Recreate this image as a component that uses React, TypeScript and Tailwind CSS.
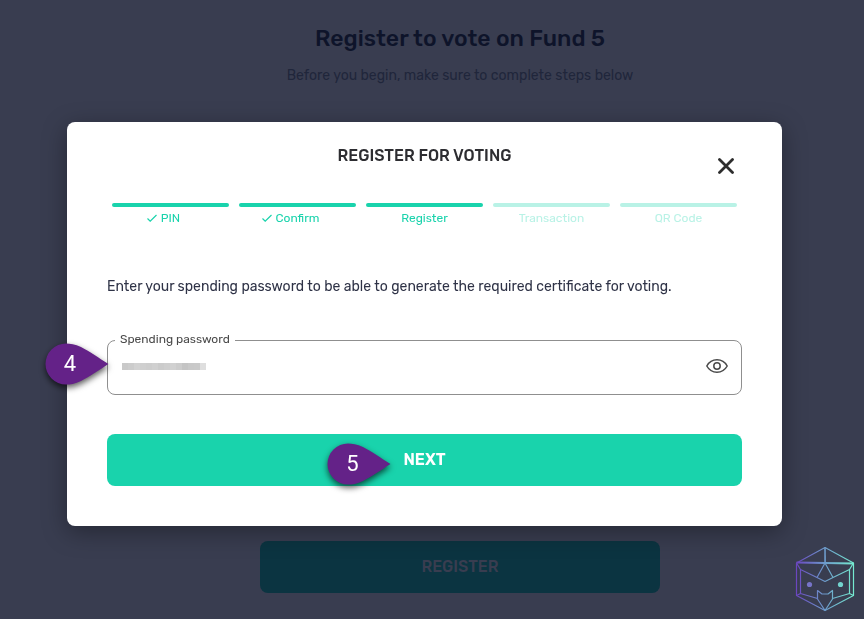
import type { ReactNode } from "react";

type Step = { label: string; state: "done" | "current" | "todo" };

const steps: Step[] = [
  { label: "PIN", state: "done" },
  { label: "Confirm", state: "done" },
  { label: "Register", state: "current" },
  { label: "Transaction", state: "todo" },
  { label: "QR Code", state: "todo" },
];

const maskBlocks = [
  "bg-[#c9c9c9]", "bg-[#cccccc]", "bg-[#d2d2d2]", "bg-[#cfcfcf]", "bg-[#cdcdcd]",
  "bg-[#d0d0d0]", "bg-[#cbcbcb]", "bg-[#cecece]", "bg-[#d1d1d1]", "bg-[#cccccc]",
  "bg-[#c4c4c4]", "bg-[#c8c8c8]", "bg-[#c9c9c9]", "bg-[#dedede]",
];

function Pin({ children }: { children: ReactNode }) {
  return (
    <span className="relative block h-[42px] w-16 font-[Roboto,Arial,sans-serif]">
      <svg
        viewBox="0 0 64 42"
        className="block h-full w-full overflow-visible drop-shadow-[0_3px_3px_rgba(0,0,0,0.65)]"
        aria-hidden="true"
      >
        <path
          d="M63.500 21 C54 15 44 8 36 4 C30 1 25 .5 21 .5 A20.5 20.5 0 0 0 21 41.5 C25 41.5 30 41 36 38 C44 34 54 27 63.500 21 Z"
          fill="#642288"
        />
      </svg>
      <span className="absolute inset-y-0 left-0 flex w-[50px] items-center justify-center text-[22px] leading-6 font-normal text-white">
        {children}
      </span>
    </span>
  );
}

function CubeLogo() {
  return (
    <svg viewBox="0 0 60 66" className="h-[66px] w-[60px]" fill="none" role="img" aria-label="Assistant">
      <defs>
        <linearGradient id="cube" gradientUnits="userSpaceOnUse" x1="1" y1="0" x2="59" y2="0">
          <stop offset="0" stopColor="#6b45c0" />
          <stop offset="0.5" stopColor="#6d9bcb" />
          <stop offset="1" stopColor="#75ecd0" />
        </linearGradient>
      </defs>
      <g stroke="url(#cube)" strokeWidth="1.2" strokeLinejoin="round">
        <path d="M30 1.5 58.5 17V49.500L30 64.500 1.500 49.500V17Z" />
        <path d="M1.500 16.500 58.500 17.500" strokeWidth="1.800" />
        <path d="M30 1.500 30.100 17" strokeWidth="1.600" />
        <path d="M1.500 17 5.500 23.500 22 31.500 30 35.500 38 31.500 54.500 23.500 58.500 17" />
        <path d="M30 17 22 31.500M30 17 38 31.500" />
        <path d="M5.500 23.500V47.500L22.500 52.500M1.500 49.500 5.500 47.500M54.500 23.500V47.500L37.500 52.500M58.500 49.500 54.500 47.500" />
        <path d="M22.500 44.500 27 48H33L37.500 44.500V53L30 64.500 22.500 53Z" />
      </g>
      <circle cx="14.500" cy="38.500" r="2.600" fill="#7774c8" />
      <circle cx="45.500" cy="38.500" r="2.600" fill="#73d3ce" />
    </svg>
  );
}

function StepItem({ label, state }: Step) {
  return (
    <li className={state === "todo" ? "flex-1 text-[#b9f2e6]" : "flex-1 text-[#19d3ac]"} aria-current={state === "current" ? "step" : undefined}>
      <div className="h-1 rounded-full bg-current" />
      <div className={`mt-[3px] flex items-center justify-center gap-1 text-xs leading-4 ${state === "done" ? "pr-3.5" : ""}`}>
        {state === "done" && (
          <svg viewBox="0 0 10 8" className="h-2 w-2.5" fill="none" stroke="currentColor" strokeWidth="1.200" aria-hidden="true">
            <path d="M.5 4.500 3.200 7.200 9.500 1" />
          </svg>
        )}
        {label}
      </div>
    </li>
  );
}

export default function App() {
  return (
    <div className="min-h-screen bg-[#393d50] font-[Rubik,Roboto,sans-serif]">
      <main className="flex min-h-screen flex-col items-center pt-5 pb-[26px] pl-14">
        <h1 className="text-[23px] leading-9 font-medium text-[#0e142a]">Register to vote on Fund 5</h1>
        <p className="mt-2 text-sm leading-6 text-[#20263b]">Before you begin, make sure to complete steps below</p>
        <button className="mt-auto h-13 w-full max-w-[400px] rounded-lg bg-[#0b3441] text-base font-medium text-[#393d50]">
          REGISTER
        </button>
      </main>

      <div className="fixed right-[9px] bottom-[7px]">
        <CubeLogo />
      </div>

      <div className="fixed inset-0 flex items-start justify-center pt-[122px] pr-[82px] pl-[67px]">
        <div
          role="dialog"
          aria-modal="true"
          aria-labelledby="dialog-title"
          className="w-full max-w-[715px] rounded-lg bg-white px-10 pt-5 pb-10 shadow-[0_6px_24px_rgba(0,0,0,0.35)]"
        >
          <header className="relative flex h-12 items-start justify-center">
            <h2 id="dialog-title" className="pt-0.5 text-base leading-6 font-medium text-[#2d2d31]">
              REGISTER FOR VOTING
            </h2>
            <button aria-label="Close" className="absolute top-3 right-1 flex size-6 items-center justify-center text-[#2d2d2d]">
              <svg viewBox="0 0 16 16" className="size-4" fill="none" stroke="currentColor" strokeWidth="2.800" strokeLinecap="round">
                <path d="M1.500 1.500 14.500 14.500M14.500 1.500 1.500 14.500" />
              </svg>
            </button>
          </header>

          <ol className="mt-[13px] flex gap-2.5 px-[5px]">
            {steps.map((step) => (
              <StepItem key={step.label} {...step} />
            ))}
          </ol>

          <p className="mt-[49px] text-sm leading-6 text-[#2f3347]">
            Enter your spending password to be able to generate the required certificate for voting.
          </p>

          <div className="relative mt-[31px]">
            <fieldset className="h-[65px] min-w-0 rounded-lg border border-[#8f8f8f] pl-[7px]">
              <legend className="h-5 px-[5px] text-xs leading-[18px] text-[#4a4a4a]">
                <label htmlFor="password">Spending password</label>
              </legend>
              <div className="flex h-8 items-center pr-3 pl-[7px]">
                <div className="relative flex h-8 flex-1 items-center">
                  <span className="flex h-[7px] w-[84px]" aria-hidden="true">
                    {maskBlocks.map((tone, i) => (
                      <span key={i} className={`h-full flex-1 ${tone}`} />
                    ))}
                  </span>
                  <input id="password" type="password" className="absolute inset-0 w-full bg-transparent outline-none" />
                </div>
                <button aria-label="Show password" className="flex size-6 items-center justify-center text-[#4a4a4a]">
                  <svg viewBox="0 0 22 14" className="h-3.5 w-[22px]" fill="none" stroke="currentColor" strokeWidth="1.500">
                    <path d="M.8 7C3 3 6.800.8 11 .8S19 3 21.200 7C19 11 15.200 13.200 11 13.200S3 11 .8 7Z" />
                    <circle cx="11" cy="7" r="3.200" />
                  </svg>
                </button>
              </div>
            </fieldset>
            <div className="absolute top-[13px] -left-[62px]">
              <Pin>4</Pin>
            </div>
          </div>

          <button className="relative mt-[39px] flex h-13 w-full items-center justify-center rounded-lg bg-[#19d3ac] text-base font-semibold text-white">
            <span className="relative">
              NEXT
              <span className="absolute top-1/2 right-full mt-[-17px] mr-3">
                <Pin>5</Pin>
              </span>
            </span>
          </button>
        </div>
      </div>
    </div>
  );
}
